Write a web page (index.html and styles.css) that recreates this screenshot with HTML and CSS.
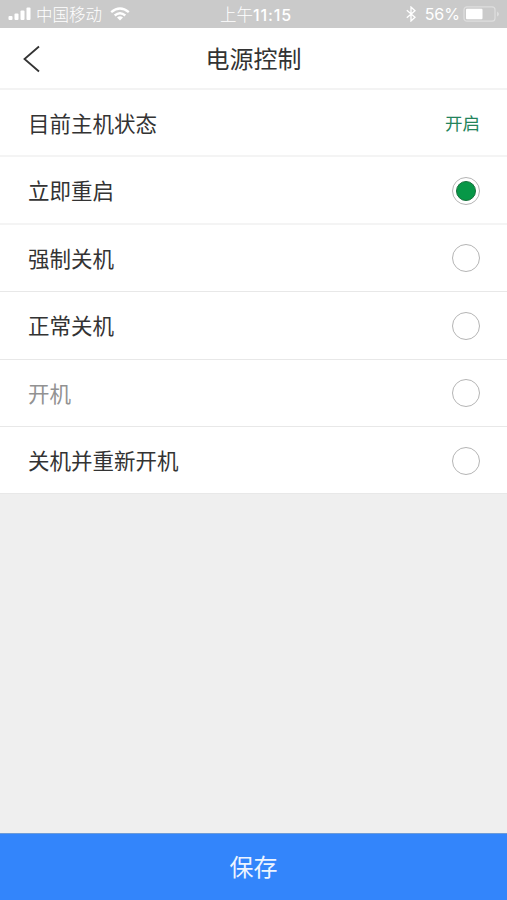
FILE: index.html
```html
<!DOCTYPE html>
<html lang="zh-CN">
<head>
<meta charset="utf-8">
<title>电源控制</title>
<link rel="stylesheet" href="styles.css">
</head>
<body>
<div class="status">
  <div class="carrier">
    <svg width="24" height="14" viewBox="0 0 24 14" fill="#fff"><rect x="0.5" y="9" width="4" height="4" rx="1"/><rect x="6.5" y="6.5" width="4" height="6.5" rx="1"/><rect x="12.5" y="3.5" width="4" height="9.500" rx="1"/><rect x="18.500" y="0.500" width="4" height="12.500" rx="1"/></svg>
    <span class="carrier-name">中国移动</span>
    <svg class="wifi" width="20" height="14" viewBox="0 0 20 14" fill="none" stroke="#fff" stroke-width="2.400"><path d="M1.200 5.200Q10 -2.200 18.800 5.200"/><path d="M4.700 8.500Q10 4 15.300 8.500"/><path d="M7 10.400Q10 8.200 13 10.400L10 13.600Z" fill="#fff" stroke="none"/></svg>
  </div>
  <div class="time">上午<b>11:15</b></div>
  <div class="power">
    <svg width="10" height="16" viewBox="0 0 10 16" fill="none" stroke="#fff" stroke-width="1.300"><path d="M0.800 4.300L9 11.300L5 15V1L9 4.700L0.800 11.700"/></svg>
    <span class="percent">56%</span>
    <svg class="battery" width="37" height="16" viewBox="0 0 37 16"><rect x="1" y="0.800" width="31" height="14.400" rx="3" fill="none" stroke="#dedede" stroke-width="1.200"/><rect x="3" y="2.800" width="16.500" height="10.400" rx="1" fill="#fff"/><path d="M34 5.500Q36 6.500 36 8T34 10.500Z" fill="#dedede"/></svg>
  </div>
</div>
<header class="header">
  <svg class="back" width="20" height="30" viewBox="0 0 20 30" fill="none" stroke="#333" stroke-width="1.800"><path d="M17 2.500L2.500 15L17 27.500"/></svg>
  <h1>电源控制</h1>
</header>
<main class="list">
  <div class="row"><span>目前主机状态</span><span class="state">开启</span></div>
  <div class="row"><span>立即重启</span><i class="radio checked"></i></div>
  <div class="row thin"><span>强制关机</span><i class="radio"></i></div>
  <div class="row thin"><span>正常关机</span><i class="radio"></i></div>
  <div class="row thin disabled"><span>开机</span><i class="radio"></i></div>
  <div class="row thin"><span>关机并重新开机</span><i class="radio"></i></div>
</main>
<button class="save">保存</button>
</body>
</html>
```
FILE: styles.css
```css
*, *::before { box-sizing: border-box; }
body {
  margin: 0;
  height: 900px;
  display: flex;
  flex-direction: column;
  overflow: hidden;
  background: #efefef;
  color: #333;
  font-family: "Noto Sans CJK SC", sans-serif;
}
svg { display: block; flex: none; }
.status {
  height: 28px;
  flex: none;
  display: grid;
  grid-template-columns: 1fr auto 1fr;
  align-items: center;
  padding: 0 7px 0 8px;
  background: #cacaca;
  color: #fff;
  font-size: 16.5px;
  line-height: 26px;
}
.carrier, .power { display: flex; align-items: center; }
.carrier-name { margin-left: 4px; font-weight: 300; }
.wifi { margin-left: 8px; }
.time { padding-left: 4px; font-weight: 300; }
.time b { font: 500 16px/26px Inter, sans-serif; letter-spacing: 0.9px; }
.power { justify-content: flex-end; }
.percent { margin: 0 3px 0 9px; font: 400 16px/26px Inter, sans-serif; }
.header {
  height: 62px;
  flex: none;
  display: grid;
  grid-template-columns: 32px 1fr 32px;
  align-items: center;
  padding: 0 22px;
  background: #fff;
  border-bottom: 2px solid #f3f3f3;
}
.back { margin-top: 1px; }
h1 {
  margin: 0;
  text-align: center;
  font-size: 24px;
  line-height: 36px;
  font-weight: 400;
}
.list { flex: none; }
.row {
  height: 67.4px;
  display: flex;
  align-items: center;
  justify-content: space-between;
  padding: 1px 27px 0 28px;
  background: #fff;
  border-bottom: 2px solid #f4f4f4;
  font-size: 21.5px;
  line-height: 32px;
}
.row > span { margin-top: -1px; }
.thin { border-bottom: 1px solid #e8e8e8; }
.disabled { color: #929292; }
.state { color: #23845b; font-size: 17.5px; }
.radio {
  width: 28px;
  height: 28px;
  padding: 3px;
  border: 1px solid #b5b5b5;
  border-radius: 50%;
}
.checked::before {
  content: "";
  display: block;
  width: 20px;
  height: 20px;
  border: 1px solid #17713c;
  border-radius: 50%;
  background: #079747;
}
.save {
  height: 67px;
  flex: none;
  margin: auto 0 0;
  padding: 0 0 2px;
  border: 0;
  border-top: 1px solid #6c9bd8;
  background: #3385fb;
  color: #edf4ff;
  font: 400 24px/64px "Noto Sans CJK SC", sans-serif;
}
```
